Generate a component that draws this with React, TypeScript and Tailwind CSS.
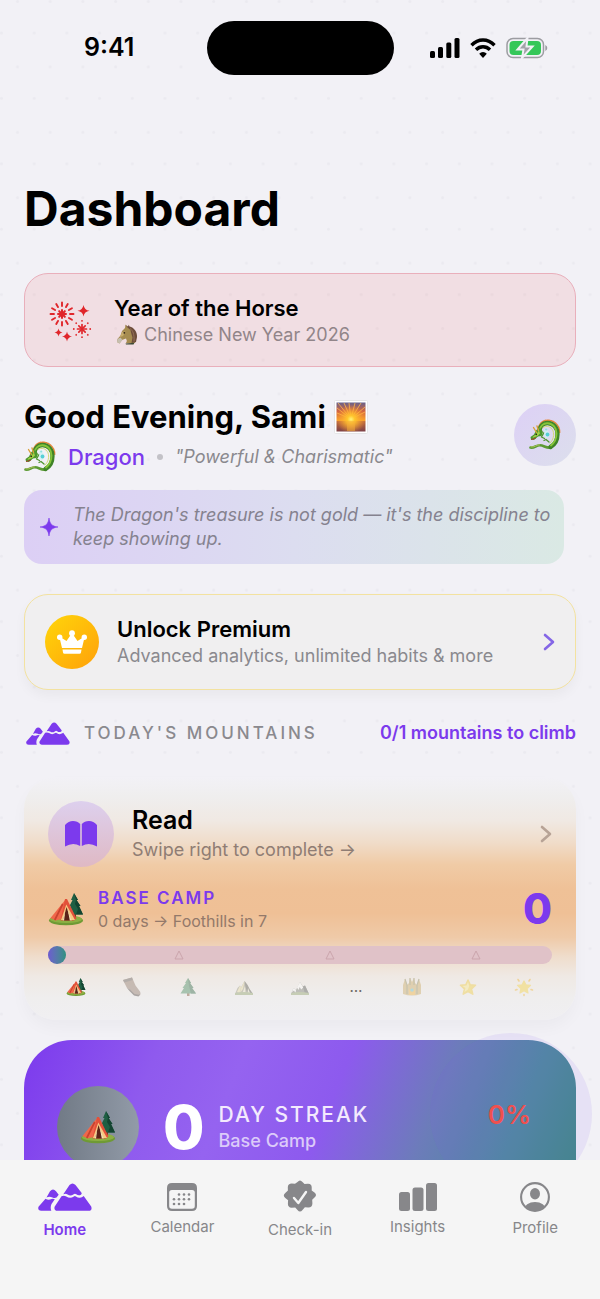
import type { ReactNode } from "react";

type IconProps = { className?: string };

const Tent = ({ className }: IconProps) => (
  <svg viewBox="0 0 36 34" className={className} aria-hidden="true">
    <ellipse cx="18" cy="28.500" rx="17" ry="4.800" fill="#6f9a35" />
    <ellipse cx="18" cy="27.300" rx="16" ry="3.800" fill="#8db043" />
    <path d="M25.500 22h2.500v5h-2.500z" fill="#6b3f22" />
    <path d="M26 1l4 7h-1.500l4 6h-1.500l4 8.500H19.500l3-8.500h-1l3-6h-1.500z" fill="#1f5f43" />
    <path d="M26 1l2 7-1 4 3 5-2 5.500h4.500L35 22.500 31 14h1.500l-4-6H30z" fill="#134431" />
    <path d="M17.500 7.500L2.500 26l5 2.500 11-2.500z" fill="#f0674a" />
    <path d="M14 11.500L6 27.500l1.500 1 8-16z" fill="#c9432f" />
    <path d="M17 7l2 0 9.500 19.500-2.500 2H12.500z" fill="#e2513a" />
    <path d="M18.300 12.500L27 28h-14z" fill="#f8c982" />
    <path d="M18.500 15l4.500 13.500h-8z" fill="#5b2418" />
    <path d="M19.600 17l2.200 11.500h1.800zM17.300 18l-2.500 10.500h1.300z" fill="#f4e3b6" />
  </svg>
);

const Dragon = ({ className }: IconProps) => (
  <svg viewBox="0 0 32 32" className={className} fill="none" strokeLinecap="round" strokeLinejoin="round" aria-hidden="true">
    <path d="M9.500 10C10 5 13.500 1.200 18.500 1.200c7 0 12 5.300 12.200 12" stroke="#e8873c" strokeWidth="1.600" strokeDasharray="1.500 1.200" />
    <path d="M1.500 28.500c3.500.8 5.500-2 9-2.200 4-.3 6.500 3 11 2.200" stroke="#5c9a34" strokeWidth="2.600" />
    <path d="M2 28c3.500.6 5.500-2.200 8.500-2.200" stroke="#b5c660" strokeWidth=".9" />
    <path d="M10.500 13c-.3-5 3-9 8-9 6 0 10 5 10 11 0 5.500-2.500 10.500-7 13" stroke="#3f8327" strokeWidth="4.300" />
    <path d="M10.500 11.500c.5-4.500 4-7.500 8-7.300 5.500.3 9 5 9 10.300 0 5-2 9-5.500 12" stroke="#86c43a" strokeWidth="1.900" />
    <path d="M14 8.500c3.500-2.500 8-1 10 3.300 1.500 4.200.3 9-3 12.200" stroke="#d3d978" strokeWidth="1" />
    <path d="M12 9.500l2 3.500-1.500 4-3.500.5-4 3.500-3-.5-.5-2.500 3.500-2.500 2-4 2-2z" fill="#4c972e" />
    <path d="M10 11.500l-2.500 3.500-4 3 .5.800 4.500-1.800 2.500-2.500z" fill="#a2d046" />
    <path d="M7.500 13.500L4.500 8.500M9.500 11.500L8 7" stroke="#d9a03c" strokeWidth="1.400" />
    <path d="M2.500 20.500l4-1.300" stroke="#a3402b" strokeWidth="1" />
    <circle cx="7.300" cy="15.500" r=".8" fill="#2f2312" />
    <path d="M15 13.500L12.500 18l3 1.500M20 23l-3-2.500-2 1" stroke="#4f9630" strokeWidth="1.300" />
    <path d="M15.500 10q4 1 5 5-1 4-3 4-2.500-1-2.500-4z" fill="#d2f1f4" opacity=".9" />
    <circle cx="18.500" cy="15.500" r="1.900" fill="#56cfd6" />
    <circle cx="17.200" cy="10.500" r="1.100" fill="#8fe0de" />
  </svg>
);

const Horse = ({ className }: IconProps) => (
  <svg viewBox="0 0 22 22" className={className} aria-hidden="true">
    <path d="M9 4l.5-3.500L11.500 3C16 3.500 20 8 20.500 13l-1.500 6H10q1.500-2.500 0-4.500L6 16l-2.500 3.500L1 18l.5-3 3-3.500L6 7z" fill="#a68c50" />
    <path d="M9.500 1l2 2.500q3 1.500 3.500 5l1.500 5-1 5.500 4.500-1 1-5C21.500 8 18 3.500 13.500 2.500L12.800.7 12 2.400z" fill="#6d4d3b" />
    <path d="M14 4.500c3 2 4.500 6 4 13" stroke="#967057" strokeWidth="1" fill="none" />
    <path d="M1.500 15l3-1.500 2 2.500-3 3.500L1 18z" fill="#c6bfb0" />
    <path d="M6 8l3.500-.5L7 12l-3 1z" fill="#c8ad6c" />
    <circle cx="8.300" cy="8.800" r=".9" fill="#2c2017" />
    <path d="M9.500 19.500l9-.7-1 1.800H10z" fill="#3f4a33" />
  </svg>
);

const Sunset = ({ className }: IconProps) => (
  <svg viewBox="0 0 34 34" className={className} aria-hidden="true">
    <defs>
      <linearGradient id="dusk" x2="0" y2="1">
        <stop offset="0" stopColor="#66618c" />
        <stop offset=".3" stopColor="#d3643f" />
        <stop offset=".62" stopColor="#f9a32c" />
        <stop offset=".63" stopColor="#c8703a" />
        <stop offset="1" stopColor="#7c4048" />
      </linearGradient>
      <radialGradient id="sun" cx=".5" cy=".58" r=".5">
        <stop offset="0" stopColor="#fff27a" />
        <stop offset=".25" stopColor="#ffc62d" />
        <stop offset="1" stopColor="#ff9a2d" stopOpacity="0" />
      </radialGradient>
    </defs>
    <rect x=".5" y=".5" width="33" height="33" rx="1" fill="#fff" stroke="#e4e4e6" />
    <rect x="2.500" y="2.500" width="29" height="29" fill="url(#dusk)" />
    <path d="M17 19L4 3M17 19L10 3M17 19L15 3M17 19L21 3M17 19L27 3M17 19L31 7M17 19L31 12M17 19L3 8M17 19L3 13" stroke="#ffb74a" strokeWidth=".8" />
    <rect x="2.500" y="2.500" width="29" height="29" fill="url(#sun)" />
    <path d="M13 21h8v10h-8z" fill="#f6ae3c" opacity=".5" />
  </svg>
);

const Fireworks = ({ className }: IconProps) => (
  <svg viewBox="0 0 44 42" className={className} fill="#e0262b" stroke="#e0262b" strokeLinecap="round" aria-hidden="true">
    {[0, 30, 60, 90, 120, 150, 180, 210, 240, 270, 300, 330].map((a) => (
      <path key={a} d="M14 6V2.500" strokeWidth="1.900" transform={`rotate(${a} 14 14)`} />
    ))}
    {[0, 45, 90, 135].map((a) => (
      <path key={a} d="M14 10v8" strokeWidth="2" transform={`rotate(${a} 14 14)`} />
    ))}
    {[0, 45, 90, 135, 180, 225, 270, 315].map((a) => (
      <g key={a} transform={`rotate(${a} 34 29)`}>
        <path d="M34 24.500V29" strokeWidth="1.700" />
        <circle cx="34" cy="20.800" r=".9" stroke="none" />
      </g>
    ))}
    <g stroke="none">
      <path d="M35.500 5q.8 5 6 5.800-5.200.8-6 5.800-.8-5-6-5.800 5.200-.8 6-5.800z" />
      <path d="M10.500 28.500q.6 3.400 4 4-3.400.6-4 4-.6-3.400-4-4 3.400-.6 4-4z" />
      <path d="M19 31.500q.7 4.200 5 5-4.300.8-5 5-.7-4.200-5-5 4.300-.8 5-5z" />
    </g>
  </svg>
);

const Sparkle = ({ className }: IconProps) => (
  <svg viewBox="0 0 18 18" className={className} fill="currentColor" aria-hidden="true">
    <path d="M9 0C9.800 6 12 8.200 18 9c-6 .8-8.200 3-9 9-.8-6-3-8.200-9-9 6-.8 8.200-3 9-9z" stroke="currentColor" strokeWidth=".6" />
  </svg>
);

const Crown = ({ className }: IconProps) => (
  <svg viewBox="0 0 32 24" className={className} fill="currentColor" aria-hidden="true">
    <path d="M5 7.500l5.500 3.500L15 4.500h2l4.500 6.500L27 7.500h1.500L26 18H6L3.500 7.500zM6.500 19.500h19l-.5 3q-.2 1.200-1.500 1.200h-15q-1.300 0-1.500-1.200z" />
    <circle cx="3.700" cy="7.200" r="2.700" />
    <circle cx="16" cy="3.200" r="2.900" />
    <circle cx="28.300" cy="7.200" r="2.700" />
  </svg>
);

const Mountains = ({ className }: IconProps) => (
  <svg viewBox="0 0 54 28" className={className} fill="currentColor" aria-hidden="true">
    <path d="M31.500 2q3-3.200 6 0l6 7.800q.8 1.200-.6 1.900-2.500 1.300-4.600-.5-1.500-1-3 .3-2.800 2.200-5.700 0-2-1.300-4.300-.2z" />
    <path d="M23.500 13.200q2.500-1.200 4.800.3 3.800 2.600 7.600 0 1-.8 2 .1 3.500 2.300 6.800.2l1-.7 7.500 10.400q1.400 4.300-2.700 4.300H19.300q-3.600-.3-2.700-4z" />
    <path d="M12 8.200q3-3.200 6 0l2.700 3.600-2.200 2.800q-2 1-4-.2-3.300-1.500-6 .1z" />
    <path d="M7.500 15.800q2.800 1.800 6 .3 1.700-.6 3.300.2L13.500 21q-1.500 3.500-.2 6.800H3.200Q-.7 27.500.5 23.700z" />
  </svg>
);

const Book = ({ className }: IconProps) => (
  <svg viewBox="0 0 32 26" className={className} fill="currentColor" aria-hidden="true">
    <path d="M0 4Q3.500 0 8 0q4.500 0 7.200 3v22q-3.500-2-7-2-4 0-8.200 2.500zM32 4Q28.500 0 24 0q-4.500 0-7.200 3v22q3.500-2 7-2 4 0 8.200 2.500z" />
  </svg>
);

const Chevron = ({ className }: IconProps) => (
  <svg viewBox="0 0 12 18" className={className} fill="none" stroke="currentColor" strokeWidth="2.600" strokeLinecap="round" strokeLinejoin="round" aria-hidden="true">
    <path d="M2 2l8 7-8 7" />
  </svg>
);

const Signal = () => (
  <svg viewBox="0 0 30 20" className="h-5 w-[30px]" aria-label="Signal">
    <rect y="13" width="5" height="7" rx="1.500" />
    <rect x="8" y="9" width="5" height="11" rx="1.500" />
    <rect x="16.300" y="4.500" width="5" height="15.500" rx="1.500" />
    <rect x="24.500" width="5" height="20" rx="1.500" />
  </svg>
);

const Wifi = () => (
  <svg viewBox="0 0 26 20" className="h-5 w-[26px]" fill="none" stroke="#000" strokeWidth="3.400" aria-label="Wi-Fi">
    <path d="M1.500 7.200Q6.500 2 13 2t11.500 5.200M6 11.700Q9 8.700 13 8.700t7 3" />
    <path d="M13 20l-3.800-4.200q1.600-1.800 3.800-1.800t3.800 1.800z" fill="#000" stroke="none" />
  </svg>
);

const Battery = () => (
  <svg viewBox="0 0 42 22" className="h-[22px] w-[42px]" aria-label="Battery charging">
    <rect x="1" y="1.500" width="36.500" height="19" rx="6" fill="none" stroke="#9c9ca1" strokeWidth="1.500" />
    <path d="M39.300 8q2 1 2 3t-2 3z" fill="#9c9ca1" />
    <rect x="3.500" y="4" width="31.500" height="14" rx="4" fill="#35c759" />
    <path d="M21.500 1L11.500 12.500h6L16 21l10.500-11.500h-6z" fill="#a3a3a8" stroke="#f2f1f6" strokeWidth="2" />
  </svg>
);

const Boot = () => (
  <svg viewBox="0 0 20 20" className="size-5" aria-hidden="true">
    <path d="M1 3l9-2.500 3.500 8 4.500 6q1.500 4-1.500 4.500l-4.500-1-4.500-5.500L5 11z" fill="#8a7263" />
    <path d="M1 3l9-2.500.8 2.500-8.500 2.500z" fill="#5c5450" />
    <path d="M5 11l3 1.500 4.500 4.500 4 .8 1.700-.8-1.700 2.500-4.500-1L7.500 14z" fill="#453b37" />
  </svg>
);

const Pine = () => (
  <svg viewBox="0 0 20 20" className="size-5" aria-hidden="true">
    <path d="M9 15h2.500v4H9z" fill="#7a4a2b" />
    <path d="M10 1l3 5h-1l3.500 5H14l4 5.500H2.500L6 11H4.500L8 6H7z" fill="#3d8558" />
    <path d="M10 1l1 8 2 7.500h5L14 11h1.500L12 6h1z" fill="#26613f" />
  </svg>
);

const Peak = () => (
  <svg viewBox="0 0 20 20" className="size-5" aria-hidden="true">
    <path d="M1 17l2.500-6L6 8.500l1 2L10.500 4l3 4 2 4L19 17z" fill="#96947c" />
    <path d="M10.500 4l1 6 2 7H19l-3.500-5-2-4z" fill="#4e5046" />
    <path d="M3 15l3-6.500 1 2L5.500 16zM10.500 4L7 11l-1 5 3-4z" fill="#e6dca0" />
    <path d="M11 9l-2.500 7h3zM14 11l-.5 5h2.500z" fill="#e9e5c6" />
    <path d="M1 16q9-2 18 0v2H1z" fill="#8a9e64" />
  </svg>
);

const SnowPeak = () => (
  <svg viewBox="0 0 20 20" className="size-5" aria-hidden="true">
    <path d="M1 17l2.500-6L6 13l4-8 3 4.500 2-1 4 8.500z" fill="#777a70" />
    <path d="M10 5l-3 5.500L8.500 13l1.200-3 1.500 2.500 2-2zM3.500 11L2 15l2-1.500L5.500 16 6 13z" fill="#fff" />
    <path d="M13 9.500L15 17h4l-4-8.500z" fill="#4c504b" />
    <path d="M1 16q9-2 18 0v2H1z" fill="#8a9e64" />
  </svg>
);

const Castle = () => (
  <svg viewBox="0 0 20 20" className="size-5" aria-hidden="true">
    <path d="M1 17V8l2-6 2 6 2-2 1-5 2 4 2-4 1 5 2 2 2-6 2 6v9q-9 3-18 0z" fill="#c9a75e" />
    <path d="M3 2l2 6v9M17 2l-2 6v9M8 1v7M12 1v7" stroke="#8b8658" strokeWidth="1.200" fill="none" />
    <path d="M7 18v-5q3-4 6 0v5z" fill="#efae31" />
    <circle cx="10" cy="13" r="1.800" fill="#5fb9c8" />
  </svg>
);

const Star = () => (
  <svg viewBox="0 0 20 20" className="size-5" aria-hidden="true">
    <path d="M10 3l2.200 4.700 5.300.5-4 3.700 1.300 5.300L10 14.500l-4.800 2.700 1.300-5.300-4-3.700 5.300-.5z" fill="#f3d13b" stroke="#f0cb3a" strokeWidth="1.500" strokeLinejoin="round" />
    <path d="M10 5l1.200 4L10 12.500 6.500 15l1-4L4.500 9l4-.5z" fill="#fbe98a" />
  </svg>
);

const GlowStar = () => (
  <svg viewBox="0 0 20 20" className="size-5" aria-hidden="true">
    <path d="M10 4l1.900 3.800 4.600.6-3.400 3.200.9 4.400-4-2.200L6 16l.9-4.400-3.400-3.200 4.600-.6z" fill="#f5d33b" stroke="#f5d33b" strokeWidth="1.200" strokeLinejoin="round" />
    <path d="M4 2.500l1 1.500M16 2.500L15 4M1.500 13l1.500-.5M18.500 13l-1.500-.5M10 17.500v1" stroke="#efb52b" strokeWidth="1.600" strokeLinecap="round" />
  </svg>
);

const CalendarIcon = () => (
  <svg viewBox="0 0 30 28" className="h-7 w-[30px]" fill="currentColor" aria-hidden="true">
    <path fillRule="evenodd" d="M5 0h20q5 0 5 5v18q0 5-5 5H5q-5 0-5-5V5Q0 0 5 0zM2.200 9.500V23q0 2.800 2.800 2.800h20q2.800 0 2.800-2.800V9.500Q27.800 7 25 7H5Q2.200 7 2.200 9.500z" />
    {[[12, 11.500], [17, 11.500], [22, 11.500], [7, 16.300], [12, 16.300], [17, 16.300], [22, 16.300], [7, 21], [12, 21], [17, 21]].map(([x, y]) => (
      <circle key={`${x}-${y}`} cx={x} cy={y} r="1.300" />
    ))}
  </svg>
);

const CheckIcon = () => (
  <svg viewBox="0 0 34 34" className="size-[34px]" aria-hidden="true">
    <path
      d="M14.500 2q2.500-3 5 0l2 2.100 3.300-.3q3.900-.2 3.900 3.500l0 3.200 2.800 2q3 2.500 0 5l-2.300 2.300.2 3.700q-.1 3.900-4 3.900l-3.500-.2-2.400 2.700q-2.500 3-5 0l-2.300-2.400-3.600.2q-3.700-.3-3.700-4l.2-3.500-2.800-2.300q-3-2.500 0-5l2.600-2.300-.1-3.500q.2-3.600 3.900-3.600l3.300.3z"
      fill="currentColor"
    />
    <path d="M11 18l4.300 5L23 12" fill="none" stroke="#f5f5f5" strokeWidth="2.400" strokeLinecap="round" strokeLinejoin="round" />
  </svg>
);

const InsightsIcon = () => (
  <svg viewBox="0 0 38 28" className="h-7 w-[38px]" fill="currentColor" aria-hidden="true">
    <rect y="9" width="11" height="19" rx="2.500" />
    <rect x="13.500" y="4.500" width="11" height="23.500" rx="2.500" />
    <rect x="27" width="11" height="28" rx="2.500" />
  </svg>
);

const ProfileIcon = () => (
  <svg viewBox="0 0 30 30" className="size-[30px]" aria-hidden="true">
    <clipPath id="face">
      <circle cx="15" cy="15" r="13.500" />
    </clipPath>
    <circle cx="15" cy="15" r="13.900" fill="none" stroke="currentColor" strokeWidth="2.100" />
    <g clipPath="url(#face)" fill="currentColor">
      <ellipse cx="15" cy="11.800" rx="5" ry="5.700" />
      <ellipse cx="15" cy="28" rx="11" ry="8" />
    </g>
  </svg>
);

const milestones: { name: string; icon: ReactNode; reached?: boolean }[] = [
  { name: "camp", icon: <Tent className="size-5" />, reached: true },
  { name: "foothills", icon: <Boot /> },
  { name: "forest", icon: <Pine /> },
  { name: "ridge", icon: <Peak /> },
  { name: "snow", icon: <SnowPeak /> },
  { name: "more", icon: "…", reached: true },
  { name: "castle", icon: <Castle /> },
  { name: "star", icon: <Star /> },
  { name: "glow", icon: <GlowStar /> },
];

const tabs: { label: string; icon: ReactNode; active?: boolean }[] = [
  { label: "Home", icon: <Mountains className="h-[34px] w-[54px]" />, active: true },
  { label: "Calendar", icon: <CalendarIcon /> },
  { label: "Check-in", icon: <CheckIcon /> },
  { label: "Insights", icon: <InsightsIcon /> },
  { label: "Profile", icon: <ProfileIcon /> },
];

function Dots() {
  return (
    <svg className="absolute inset-0 -z-10 size-full" aria-hidden="true">
      <pattern id="dots" width="32.700" height="65.400" patternUnits="userSpaceOnUse">
        <circle cx="1.500" cy="33" r="1.500" fill="#ebeaf0" />
        <circle cx="17.500" cy="1.500" r="1.500" fill="#ebeaf0" />
      </pattern>
      <rect width="100%" height="100%" fill="url(#dots)" />
    </svg>
  );
}

function StatusBar() {
  return (
    <div className="grid grid-cols-[1fr_187px_1fr] items-center pt-[21px]">
      <div className="pl-3 text-center text-[25px] font-semibold">9:41</div>
      <div className="h-[54px] rounded-full bg-black"></div>
      <div className="flex items-center justify-center gap-2.5 pr-4">
        <Signal />
        <Wifi />
        <Battery />
      </div>
    </div>
  );
}

function HabitCard() {
  return (
    <section className="mt-[31px] rounded-[32px] bg-[linear-gradient(180deg,#f2f1f6_0%,#efeeee_8%,#f0e9e3_18%,#f0dcc9_27%,#f0cba6_36%,#efc197_46%,#efc096_56%,#efcaa8_66%,#efddcc_74%,#efe9e4_82%,#efeeee_91%,#f0eff2_100%)] px-6 pt-6 pb-[22px] shadow-[0_8px_16px_rgba(0,0,0,0.03)]">
      <div className="flex items-center">
        <div className="flex size-[66px] items-center justify-center rounded-full bg-linear-to-b from-[#ddd0ee] to-[#dfb9c4] text-[#7c3aed]">
          <Book className="h-[26px] w-8" />
        </div>
        <div className="ml-[18px] flex-1">
          <h3 className="text-[25px] leading-8 font-semibold">Read</h3>
          <p className="text-lg leading-7 text-[#8f7d74]">Swipe right to complete →</p>
        </div>
        <Chevron className="h-[18px] w-3 text-[#b7a396]" />
      </div>
      <div className="mt-[19px] flex items-center">
        <Tent className="h-[34px] w-9" />
        <div className="ml-3.5 flex-1">
          <h4 className="text-[17px] leading-6 font-semibold tracking-[2px] text-[#7c3aed]">BASE CAMP</h4>
          <p className="text-base leading-[22px] text-[#93796a]">0 days → Foothills in 7</p>
        </div>
        <span className="text-[42px] leading-[46px] font-extrabold text-[#7c3aed]">0</span>
      </div>
      <div className="relative mt-3.5 h-[18px] rounded-full bg-[#e0c2c8]">
        <div className="size-[18px] rounded-full bg-linear-to-r from-[#6d5bd0] to-[#2f9080]"></div>
        {["left-[26%]", "left-[56%]", "left-[85%]"].map((left) => (
          <svg key={left} viewBox="0 0 10 10" className={`absolute top-1 size-2.5 -translate-x-1/2 ${left}`} fill="none" stroke="#cba5ac" aria-hidden="true">
            <path d="M5 1l4 8H1z" strokeLinejoin="round" />
          </svg>
        ))}
      </div>
      <div className="mt-3 flex h-[22px] items-center">
        {milestones.map((m) => (
          <div key={m.name} className={m.reached ? "flex flex-1 justify-center text-[15px] leading-5 text-[#6e6964]" : "flex flex-1 justify-center opacity-40"}>
            {m.icon}
          </div>
        ))}
      </div>
    </section>
  );
}

function StreakCard() {
  return (
    <section className="relative mt-5 flex items-center rounded-[48px] bg-[linear-gradient(112deg,#7c3aed_0%,#8f5aee_22%,#9563f0_36%,#8d5aee_53%,#6c7cba_70%,#4f89a0_84%,#3a8a7c_100%)] px-[33px] pt-[46px] pb-14">
      <div className="absolute -top-[7px] -right-4 size-[162px] rounded-full bg-[#7c5cf0]/10"></div>
      <div className="flex size-[82px] items-center justify-center rounded-full bg-linear-to-r from-[#717a86] to-[#929ba8]">
        <Tent className="h-[34px] w-9" />
      </div>
      <span className="ml-6 text-[60px] leading-[60px] font-extrabold text-white">0</span>
      <div className="ml-3.5 flex-1">
        <p className="text-[21px] leading-7 font-medium tracking-[2px] text-[#f3eafd]">DAY STREAK</p>
        <p className="text-lg leading-6 font-medium text-[#dccbf9]">Base Camp</p>
      </div>
      <span className="relative -mt-6 mr-3 text-[26px] leading-8 font-semibold text-[#f0504f]">0%</span>
    </section>
  );
}

export default function App() {
  return (
    <div className="flex h-screen flex-col overflow-hidden bg-[#f2f1f6] font-['Inter',sans-serif] text-black">
      <main className="relative isolate min-h-0 flex-1 overflow-y-auto [scrollbar-width:none]">
        <Dots />
        <StatusBar />
        <div className="px-6 pb-10">
          <h1 className="mt-[104px] text-5xl leading-[60px] font-bold">Dashboard</h1>

          <section className="mt-[34px] flex items-center gap-[22px] rounded-3xl border border-[#e9afbb] bg-[#ee3b3b]/10 px-[23px] pt-5 pb-[18px]">
            <Fireworks className="h-[42px] w-11" />
            <div>
              <h2 className="text-[22px] leading-7 font-semibold">Year of the Horse</h2>
              <p className="flex items-center gap-1.5 text-lg leading-[26px] text-[#918589]">
                <Horse className="ml-0.5 size-[22px]" />
                Chinese New Year 2026
              </p>
            </div>
          </section>

          <section className="mt-[30px] flex items-center justify-between">
            <div>
              <h2 className="flex items-center gap-2 text-[31px] leading-10 font-bold">
                Good Evening, Sami
                <Sunset className="size-[34px]" />
              </h2>
              <div className="mt-1 flex h-8 items-center">
                <Dragon className="size-8" />
                <span className="ml-3 text-[22px] font-medium text-[#7c3aed]">Dragon</span>
                <span className="mx-3 size-1.5 rounded-full bg-[#c3c2c7]"></span>
                <span className="text-lg text-[#8a898e] italic">"Powerful & Charismatic"</span>
              </div>
            </div>
            <div className="flex size-[62px] items-center justify-center rounded-full bg-linear-to-br from-[#ddd0f6] to-[#dcdfec]">
              <Dragon className="size-8" />
            </div>
          </section>

          <section className="mt-[17px] mr-3 flex items-center gap-[15px] rounded-[18px] bg-linear-to-r from-[#dccff5] via-[#dcddf0] to-[#dae9e4] py-[13px] pr-2.5 pl-4">
            <Sparkle className="size-[18px] shrink-0 text-[#7c3aed]" />
            <p className="text-lg leading-6 text-[#85828f] italic">The Dragon's treasure is not gold — it's the discipline to keep showing up.</p>
          </section>

          <button type="button" className="mt-[30px] flex w-full items-center rounded-3xl border border-[#f3e2a0] bg-[#f0eff0] py-5 pr-5 pl-5 text-left shadow-[0_6px_12px_rgba(0,0,0,0.04)]">
            <span className="flex size-[54px] items-center justify-center rounded-full bg-linear-to-br from-[#ffd60a] to-[#ffa00a] text-white">
              <Crown className="h-6 w-8" />
            </span>
            <span className="ml-[18px] flex-1">
              <span className="block text-[22px] leading-7 font-semibold">Unlock Premium</span>
              <span className="block text-lg leading-[26px] text-[#8a898e]">Advanced analytics, unlimited habits & more</span>
            </span>
            <Chevron className="h-[18px] w-3 text-[#8466e6]" />
          </button>

          <div className="mt-[30px] flex items-center">
            <Mountains className="ml-0.5 h-[23px] w-11 text-[#7c3aed]" />
            <h2 className="ml-3.5 text-[17px] leading-[26px] font-medium tracking-[3px] text-[#8a898e]">TODAY'S MOUNTAINS</h2>
            <span className="ml-auto text-lg leading-[26px] font-semibold text-[#7c3aed]">0/1 mountains to climb</span>
          </div>

          <HabitCard />
          <StreakCard />
        </div>
      </main>

      <nav className="flex items-center bg-[#f5f5f5] px-1.5 pt-5 pb-[59px]">
        {tabs.map((tab) => (
          <a key={tab.label} href="#" className={tab.active ? "flex flex-1 flex-col items-center gap-1.5 text-[15px] leading-5 font-semibold text-[#7c3aed]" : "flex flex-1 flex-col items-center gap-1.5 text-[15px] leading-5 text-[#87878a]"}>
            {tab.icon}
            {tab.label}
          </a>
        ))}
      </nav>
    </div>
  );
}
